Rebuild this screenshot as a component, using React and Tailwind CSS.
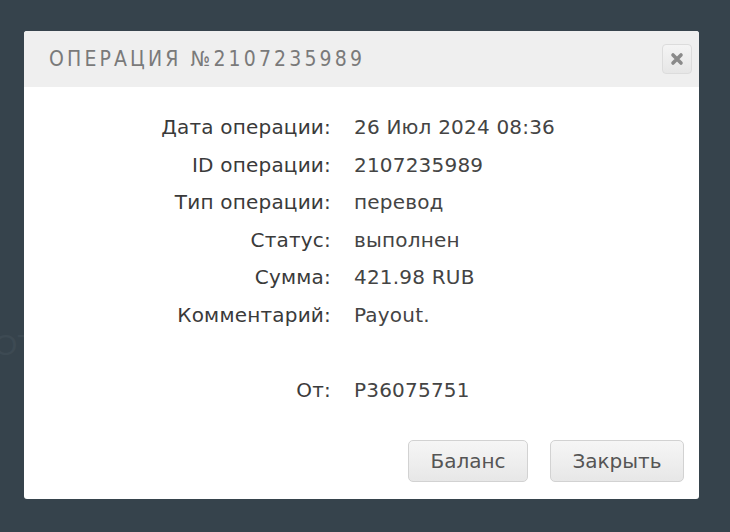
const rows = [
  ['Дата операции:', '26 Июл 2024 08:36'],
  ['ID операции:', '2107235989'],
  ['Тип операции:', 'перевод'],
  ['Статус:', 'выполнен'],
  ['Сумма:', '421.98 RUB'],
  ['Комментарий:', 'Payout.'],
  ['', ''],
  ['От:', 'P36075751'],
]

export default function App() {
  return (
    <div className="relative w-[730px] h-[532px] bg-[#36434c] overflow-hidden pt-[31px] pl-[24px]">
      <div className="absolute left-[-6px] top-[322px] text-[30px] text-[#3d4a53] font-['Liberation_Sans',sans-serif]">OT</div>

      <div className="relative w-[675px] h-[468px] bg-white rounded-[3px] overflow-hidden flex flex-col">
        {/* header */}
        <div className="h-[56px] bg-[#efefef] flex items-center justify-between pl-[25px] pr-[7px]">
          <h2 className="text-[21px] tracking-[0.15em] text-[#7a7a7a] font-['DejaVu_Sans_Condensed','DejaVu_Sans',sans-serif] font-light pt-[2px]">
            ОПЕРАЦИЯ №2107235989
          </h2>
          <button className="w-[30px] h-[30px] rounded-[4px] border border-[#dcdcdc] bg-gradient-to-b from-[#f4f4f4] to-[#e6e6e6] flex items-center justify-center">
            <svg width="16" height="16" viewBox="0 0 16 16">
              <path d="M4 4 L12 12 M12 4 L4 12" stroke="#8a8a8a" strokeWidth="3.6" strokeLinecap="round" />
            </svg>
          </button>
        </div>

        {/* details */}
        <div className="grid grid-cols-[307px_1fr] gap-x-[23px] pt-[22px] font-['DejaVu_Sans',sans-serif] text-[20px] tracking-[0.01em] text-[#333] leading-[37.5px]">
          {rows.map(([label, value], i) => (
            <div key={i} className="contents">
              <div className="text-right h-[37.5px] text-[#3a3a3a]">{label}</div>
              <div className="h-[37.5px] text-[#444]">{value}</div>
            </div>
          ))}
        </div>

        {/* footer */}
        <div className="flex justify-end gap-[22px] pr-[15px] mt-[31px] font-['DejaVu_Sans',sans-serif] text-[20px] text-[#555]">
          <button className="w-[120px] h-[42px] rounded-[5px] border border-[#d2d2d2] bg-gradient-to-b from-[#f6f6f6] to-[#e7e7e7]">
            Баланс
          </button>
          <button className="w-[134px] h-[42px] rounded-[5px] border border-[#d2d2d2] bg-gradient-to-b from-[#f6f6f6] to-[#e7e7e7]">
            Закрыть
          </button>
        </div>
      </div>
    </div>
  )
}
